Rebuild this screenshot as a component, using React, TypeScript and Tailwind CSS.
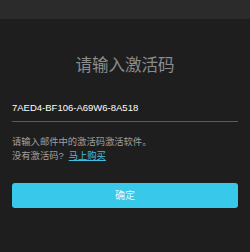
export default function App() {
  return (
    <div
      className="flex h-[252px] w-[250px] flex-col bg-[#1e1e1e]"
      style={{ fontFamily: '"Liberation Sans", "Noto Sans CJK SC", sans-serif' }}
    >
      <div className="h-[19px] bg-[#2b2b2b]" />
      <div className="flex flex-col px-3">
        <h1 className="mt-[36px] text-center text-[16.5px] leading-[20px] text-[#8c8c8c]">
          请输入激活码
        </h1>
        <div className="mt-[26px] border-b border-[#5a5a5a] pb-[6px] text-[9.5px] leading-[14px] text-white">
          7AED4-BF106-A69W6-8A518
        </div>
        <p className="mt-[13px] text-[9.3px] leading-[14px] text-[#a0a0a0]">
          请输入邮件中的激活码激活软件。
          <br />
          没有激活码?
          <a className="ml-[5px] text-[#3fc0e0] underline">马上购买</a>
        </p>
        <button className="mt-[20px] h-[25px] rounded-[3px] bg-[#38c8ea] text-[10px] text-[#e8f8fc]">
          确定
        </button>
      </div>
    </div>
  );
}
